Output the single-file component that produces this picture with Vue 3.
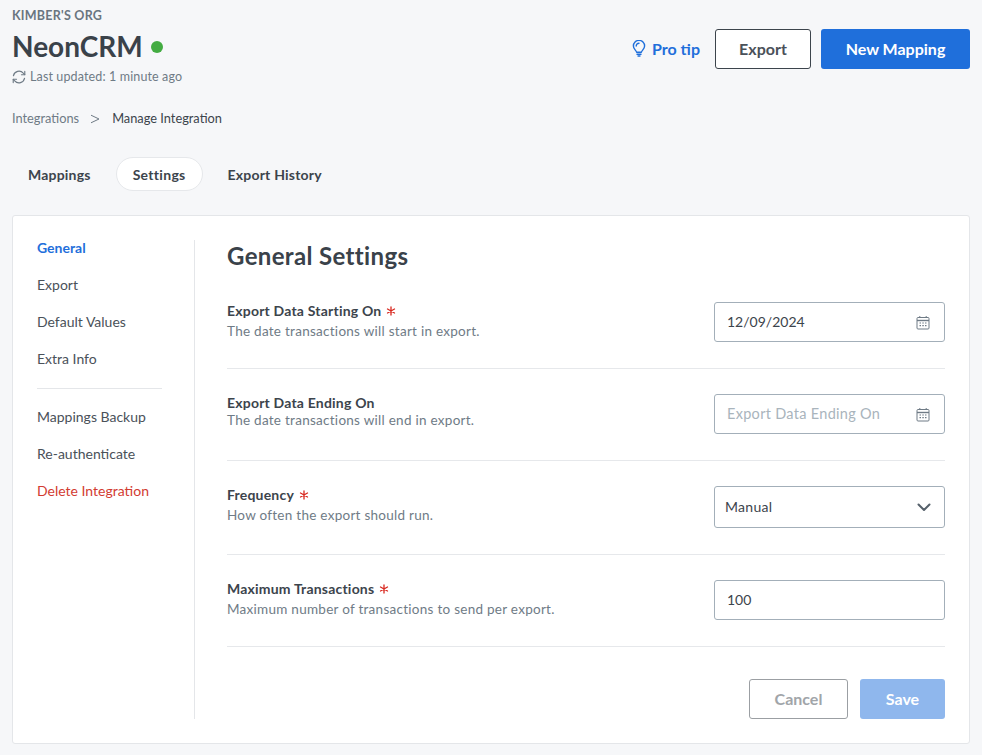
<template>
  <div class="page">
    <header class="top">
      <div class="title-block">
        <div class="org">KIMBER'S ORG</div>
        <div class="name-line">
          <h1>NeonCRM</h1>
          <span class="status-dot"></span>
        </div>
        <div class="updated">
          <svg width="14" height="14" viewBox="0 0 16 16" fill="none" stroke="#6f7b86" stroke-width="1.3" stroke-linecap="round" stroke-linejoin="round">
            <path d="M1.6 6.6A6.5 6.5 0 0 1 12.9 3.6L14.6 5.3" />
            <path d="M14.6 1.6V5.4H10.8" />
            <path d="M14.4 9.4A6.5 6.5 0 0 1 3.1 12.4L1.4 10.7" />
            <path d="M1.4 14.4V10.6H5.2" />
          </svg>
          <span>Last updated: 1 minute ago</span>
        </div>
      </div>
      <div class="top-actions">
        <a class="pro-tip">
          <svg width="14" height="17" viewBox="0 0 14 17" fill="none" stroke="#1f6fdb" stroke-width="1.4" stroke-linecap="round" stroke-linejoin="round">
            <path d="M4.6 12.2C4.4 10.4 1.4 9.2 1.4 6A5.6 5.6 0 0 1 12.6 6C12.6 9.2 9.6 10.4 9.4 12.2Z" />
            <path d="M5 14.2H9" />
            <path d="M6 16H8" />
            <path d="M4.2 6A2.8 2.8 0 0 1 7 3.2" />
          </svg>
          <span>Pro tip</span>
        </a>
        <button class="btn btn-outline">Export</button>
        <button class="btn btn-primary new-mapping">New Mapping</button>
      </div>
    </header>

    <nav class="crumbs">
      <span class="crumb-link">Integrations</span>
      <svg class="crumb-sep" width="10" height="10" viewBox="0 0 10 10" fill="none" stroke="#6f7b86" stroke-width="1">
        <path d="M1 1.2L9 5L1 8.8" />
      </svg>
      <span class="crumb-current">Manage Integration</span>
    </nav>

    <div class="tabs">
      <div
        v-for="tab in tabs"
        :key="tab"
        class="tab"
        :class="{ active: tab === 'Settings' }"
      >
        {{ tab }}
      </div>
    </div>

    <section class="card">
      <aside class="side">
        <a
          v-for="item in sideTop"
          :key="item"
          class="side-item"
          :class="{ current: item === 'General' }"
        >{{ item }}</a>
        <div class="side-rule"></div>
        <a
          v-for="item in sideBottom"
          :key="item"
          class="side-item"
          :class="{ danger: item === 'Delete Integration' }"
        >{{ item }}</a>
      </aside>

      <main class="content">
        <h2>General Settings</h2>

        <div v-for="row in rows" :key="row.label" class="row">
          <div class="row-text">
            <div class="row-label" :class="{ required: row.required }">
              <span>{{ row.label }}</span>
              <svg v-if="row.required" width="10" height="10" viewBox="0 0 10 10" fill="none" stroke="#d8281f" stroke-width="1.3" stroke-linecap="round">
                <path d="M5 1V9M1.5 3L8.5 7M8.5 3L1.5 7" />
              </svg>
            </div>
            <div class="row-help">{{ row.help }}</div>
          </div>

          <div class="field" :class="{ tall: row.type === 'select' }">
            <span :class="row.value ? 'value' : 'placeholder'">{{ row.value || row.placeholder }}</span>
            <svg v-if="row.type === 'date'" width="14" height="15" viewBox="0 0 14 15" fill="none" stroke="#6f7b86" stroke-width="1">
              <rect x="1" y="2.5" width="12" height="11.5" rx="1" />
              <path d="M1 5.5H13" stroke-width="1.4" />
              <path d="M3.8 1V3M10.2 1V3" />
              <path d="M3.5 8H5M6.3 8H7.8M9 8H10.5M3.5 10.6H5M6.3 10.6H7.8M9 10.6H10.5" stroke-width="1.2" />
            </svg>
            <svg v-if="row.type === 'select'" class="chevron" width="14" height="9" viewBox="0 0 14 9" fill="none" stroke="#56616b" stroke-width="2" stroke-linecap="round" stroke-linejoin="round">
              <path d="M1.5 1.5L7 7L12.5 1.5" />
            </svg>
          </div>
        </div>

        <div class="form-actions">
          <button class="btn btn-cancel">Cancel</button>
          <button class="btn btn-save">Save</button>
        </div>
      </main>
    </section>
  </div>
</template>

<script setup>
const tabs = ['Mappings', 'Settings', 'Export History']
const sideTop = ['General', 'Export', 'Default Values', 'Extra Info']
const sideBottom = ['Mappings Backup', 'Re-authenticate', 'Delete Integration']

const rows = [
  {
    label: 'Export Data Starting On',
    help: 'The date transactions will start in export.',
    required: true,
    type: 'date',
    value: '12/09/2024'
  },
  {
    label: 'Export Data Ending On',
    help: 'The date transactions will end in export.',
    required: false,
    type: 'date',
    value: '',
    placeholder: 'Export Data Ending On'
  },
  {
    label: 'Frequency',
    help: 'How often the export should run.',
    required: true,
    type: 'select',
    value: 'Manual'
  },
  {
    label: 'Maximum Transactions',
    help: 'Maximum number of transactions to send per export.',
    required: true,
    type: 'text',
    value: '100'
  }
]
</script>

<style>
html,
body {
  margin: 0;
  background: #f6f7f9;
}
</style>

<style scoped>
.page {
  box-sizing: border-box;
  width: 982px;
  height: 755px;
  padding: 8px 12px 0;
  overflow: hidden;
  background: #f6f7f9;
  font-family: Lato, "Open Sans", sans-serif;
  color: #3c444c;
}

.top {
  display: flex;
  justify-content: space-between;
}

.org {
  font-size: 12.5px;
  line-height: 15px;
  font-weight: 700;
  letter-spacing: 0.25px;
  color: #6a7580;
}

.name-line {
  display: flex;
  align-items: center;
  gap: 8px;
  margin-top: 3px;
}

h1 {
  margin: 0;
  font-size: 28px;
  line-height: 40px;
  font-weight: 700;
  color: #3a424a;
}

.status-dot {
  width: 12px;
  height: 12px;
  margin-top: 2px;
  border-radius: 50%;
  background: #43ac42;
}

.updated {
  display: flex;
  align-items: center;
  gap: 4px;
  margin-top: 2px;
  font-size: 12.5px;
  line-height: 18px;
  letter-spacing: 0.13px;
  color: #6f7b86;
}

.top-actions {
  display: flex;
  align-items: center;
  height: 40px;
  margin-top: 21px;
}

.pro-tip {
  display: flex;
  align-items: center;
  gap: 6px;
  margin-right: 15px;
  padding-bottom: 1px;
  font-size: 16px;
  font-weight: 700;
  color: #1f6fdb;
}

.btn {
  box-sizing: border-box;
  height: 40px;
  padding: 0 0 1px;
  border-radius: 3px;
  font-family: inherit;
  font-size: 16px;
  font-weight: 700;
}

.btn-outline {
  width: 96px;
  margin-right: 10px;
  border: 1px solid #3c444c;
  background: #fff;
  color: #4a5159;
}

.btn-primary {
  border: none;
  background: #1f6fdb;
  color: #fff;
}

.new-mapping {
  width: 149px;
}

.crumbs {
  display: flex;
  align-items: center;
  margin-top: 23px;
  font-size: 12.8px;
  line-height: 18px;
}

.crumb-link {
  color: #6f7b86;
}

.crumb-sep {
  margin: 2px 12px 0 11px;
}

.crumb-current {
  color: #3c444c;
}

.tabs {
  display: flex;
  gap: 8px;
  margin: 30px 0 0 -1px;
}

.tab {
  display: flex;
  align-items: center;
  box-sizing: border-box;
  height: 34px;
  padding: 0 16px;
  border: 1px solid transparent;
  border-radius: 17px;
  font-size: 14px;
  font-weight: 700;
  letter-spacing: 0.2px;
  color: #3c444c;
}

.tab.active {
  border-color: #e6e8eb;
  background: #fff;
  letter-spacing: 0.3px;
}

.card {
  display: flex;
  box-sizing: border-box;
  height: 529px;
  margin-top: 24px;
  padding: 24px;
  border: 1px solid #e4e6e9;
  border-radius: 3px;
  background: #fff;
}

.side {
  box-sizing: border-box;
  flex: none;
  width: 158px;
  border-right: 1px solid #e4e6e9;
}

.side-item {
  display: block;
  margin-bottom: 21px;
  font-size: 14px;
  line-height: 16px;
  color: #4a5159;
}

.side-item.current {
  font-weight: 700;
  color: #1f6fdb;
}

.side-item.danger {
  color: #d23b31;
}

.side-rule {
  width: 125px;
  height: 1px;
  margin-bottom: 20px;
  background: #e4e6e9;
}

.content {
  flex: 1;
  min-width: 0;
  padding-left: 32px;
}

h2 {
  margin: 0 0 31px;
  font-size: 24px;
  line-height: 31px;
  font-weight: 700;
  letter-spacing: 0.35px;
  color: #3a424a;
}

.row {
  display: flex;
  justify-content: space-between;
  padding: 0 0 26px;
  margin-bottom: 25px;
  border-bottom: 1px solid #e6e8eb;
}

.row-label {
  font-size: 14px;
  line-height: 17px;
  font-weight: 700;
  letter-spacing: 0.2px;
  color: #3c444c;
}

.row-label.required {
  display: flex;
  align-items: center;
  gap: 5px;
  box-sizing: border-box;
  min-height: 20px;
  padding-bottom: 3px;
}

.row-help {
  font-size: 13.5px;
  line-height: 18px;
  letter-spacing: 0.27px;
  color: #6f7b86;
}

.field {
  display: flex;
  align-items: center;
  justify-content: space-between;
  box-sizing: border-box;
  flex: none;
  width: 231px;
  height: 40px;
  padding: 0 14px 0 12px;
  border: 1px solid #a3afb9;
  border-radius: 3px;
  background: #fff;
  font-size: 14px;
}

.field.tall {
  height: 42px;
  padding: 0 13px 0 10px;
}

.field.tall .value {
  letter-spacing: 0.3px;
}

.value,
.placeholder {
  padding-bottom: 2px;
}

.value {
  color: #3c444c;
}

.placeholder {
  font-size: 14.5px;
  letter-spacing: 0.3px;
  color: #a9b4bc;
}

.form-actions {
  display: flex;
  justify-content: flex-end;
  gap: 12px;
  margin-top: 32px;
}

.btn-cancel {
  width: 99px;
  border: 1px solid #9b9fa3;
  background: #fff;
  color: #a1a5a9;
}

.btn-save {
  width: 85px;
  border: none;
  background: #8fb7ed;
  color: #fff;
}
</style>
